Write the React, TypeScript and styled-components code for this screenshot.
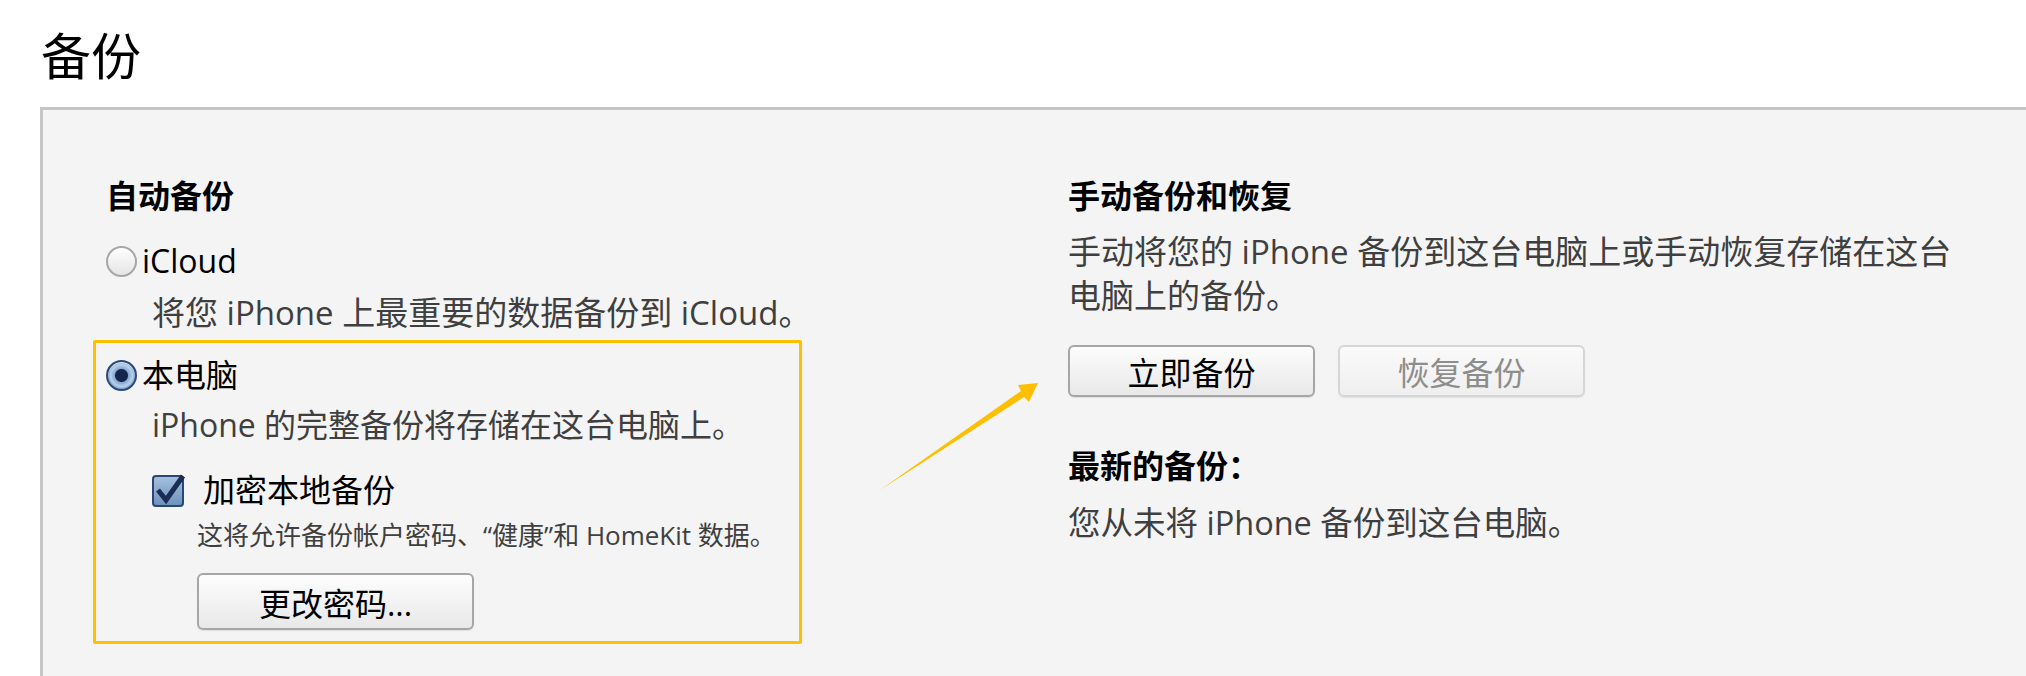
import styled, { createGlobalStyle } from "styled-components";

const GlobalStyle = createGlobalStyle`
  html, body {
    margin: 0;
    padding: 0;
    background: #ffffff;
    overflow: hidden;
  }
  body {
    font-family: "Open Sans", "Noto Sans CJK SC", sans-serif;
    color: #000;
  }
`;

const Page = styled.div`
  position: relative;
  width: 2026px;
  height: 676px;
  overflow: hidden;
`;

const PageTitle = styled.h1`
  margin: 0;
  padding: 25px 0 0 41px;
  font-size: 50px;
  line-height: 63px;
  font-weight: 400;
`;

const Panel = styled.div`
  margin: 19px 0 0 40px;
  height: 600px;
  background: #f4f4f4;
  border-left: 3px solid #c6c6c6;
  border-top: 3px solid #c6c6c6;
  padding: 66px 0 0 63px;
  display: grid;
  grid-template-columns: 962px 1fr;
  box-sizing: border-box;
`;

const Column = styled.div`
  display: flex;
  flex-direction: column;
  align-items: flex-start;
`;

const SectionTitle = styled.div<{ $gap?: number }>`
  margin-top: ${(p) => p.$gap ?? 0}px;
  font-size: 32px;
  line-height: 40px;
  font-weight: 700;
`;

const OptionRow = styled.label<{ $gap?: number }>`
  display: flex;
  align-items: center;
  gap: 5px;
  margin-top: ${(p) => p.$gap ?? 0}px;
  font-size: 32px;
  line-height: 40px;
`;

const Radio = styled.span<{ $checked?: boolean }>`
  width: 31px;
  height: 31px;
  border-radius: 50%;
  box-sizing: border-box;
  border: 2px solid ${(p) => (p.$checked ? "#2b4a7c" : "#a6a6a6")};
  background: ${(p) =>
    p.$checked
      ? "radial-gradient(circle at 50% 50%, #14264c 0, #14264c 6px, #86a8d0 7px, #b9d0ea 11px, #7597c3 14px)"
      : "linear-gradient(#ffffff, #e4e4e4)"};
  box-shadow: inset 0 1px 1px rgba(255, 255, 255, 0.8);
`;

const Desc = styled.div<{ $gap?: number; $indent?: number; $lh?: number; $size?: number }>`
  margin-top: ${(p) => p.$gap ?? 0}px;
  padding-left: ${(p) => p.$indent ?? 0}px;
  font-size: ${(p) => p.$size ?? 33}px;
  line-height: ${(p) => p.$lh ?? 40}px;
  color: #3f3f3f;
`;

const SmallDesc = styled.div`
  margin-top: 8px;
  padding-left: 91px;
  font-size: 26px;
  line-height: 34px;
  color: #3f3f3f;
`;

const Highlight = styled.div`
  margin: 7px 0 0 -13px;
  width: 709px;
  box-sizing: border-box;
  border: 3px solid #ffc000;
  border-radius: 2px;
  padding: 12px 0 11px 10px;
  display: flex;
  flex-direction: column;
  align-items: flex-start;
`;

const CheckRow = styled.label`
  display: flex;
  align-items: center;
  gap: 15px;
  margin-top: 25px;
  padding-left: 44px;
  font-size: 32px;
  line-height: 40px;
`;

const PushButton = styled.button<{ $w: number; $h: number; $disabled?: boolean }>`
  width: ${(p) => p.$w}px;
  height: ${(p) => p.$h}px;
  padding: 0;
  font-family: inherit;
  font-size: 32px;
  color: ${(p) => (p.$disabled ? "#8d8d8d" : "#000")};
  border: 2px solid ${(p) => (p.$disabled ? "#d6d6d6" : "#a6a6a6")};
  border-radius: 6px;
  background: ${(p) =>
    p.$disabled
      ? "linear-gradient(#fafafa, #efefef)"
      : "linear-gradient(#fdfdfd, #e8e8e8)"};
  box-shadow: 0 1px 1px rgba(0, 0, 0, 0.08);
`;

const LeftButton = styled(PushButton)`
  margin: 21px 0 0 91px;
`;

const ButtonRow = styled.div`
  display: flex;
  gap: 23px;
  margin-top: 27px;
`;

const Arrow = styled.svg`
  position: absolute;
  left: 868px;
  top: 376px;
`;

function CheckIcon() {
  return (
    <svg width="38" height="36" viewBox="0 0 38 36">
      <defs>
        <linearGradient id="cbFill" x1="0" y1="0" x2="0" y2="1">
          <stop offset="0" stopColor="#a6c1df" />
          <stop offset="1" stopColor="#6c90be" />
        </linearGradient>
      </defs>
      <rect x="3" y="4" width="30" height="30" rx="3" fill="url(#cbFill)" stroke="#2a4674" strokeWidth="2" />
      <path d="M8 18 L16 28 L33 4" fill="none" stroke="#1b2c55" strokeWidth="5" strokeLinejoin="miter" />
    </svg>
  );
}

export default function App() {
  return (
    <Page>
      <GlobalStyle />
      <PageTitle>备份</PageTitle>
      <Panel>
        <Column>
          <SectionTitle>自动备份</SectionTitle>
          <OptionRow $gap={25}>
            <Radio />
            iCloud
          </OptionRow>
          <Desc $gap={12} $indent={46}>
            将您 iPhone 上最重要的数据备份到 iCloud。
          </Desc>
          <Highlight>
            <OptionRow>
              <Radio $checked />
              本电脑
            </OptionRow>
            <Desc $gap={10} $indent={46} $size={32}>
              iPhone 的完整备份将存储在这台电脑上。
            </Desc>
            <CheckRow>
              <CheckIcon />
              加密本地备份
            </CheckRow>
            <SmallDesc>这将允许备份帐户密码、“健康”和 HomeKit 数据。</SmallDesc>
            <LeftButton $w={277} $h={57}>更改密码...</LeftButton>
          </Highlight>
        </Column>
        <Column>
          <SectionTitle>手动备份和恢复</SectionTitle>
          <Desc $gap={14} $lh={44}>
            手动将您的 iPhone 备份到这台电脑上或手动恢复存储在这台
            <br />
            电脑上的备份。
          </Desc>
          <ButtonRow>
            <PushButton $w={247} $h={52}>立即备份</PushButton>
            <PushButton $w={247} $h={52} $disabled>恢复备份</PushButton>
          </ButtonRow>
          <SectionTitle $gap={49}>最新的备份：</SectionTitle>
          <Desc $gap={17} $size={32.5}>您从未将 iPhone 备份到这台电脑。</Desc>
        </Column>
      </Panel>
      <Arrow width="180" height="125" viewBox="0 0 180 125">
        <polygon
          points="12,114 156,21 161,26 170,7 150,9 153,15"
          fill="#ffbf00"
        />
      </Arrow>
    </Page>
  );
}
